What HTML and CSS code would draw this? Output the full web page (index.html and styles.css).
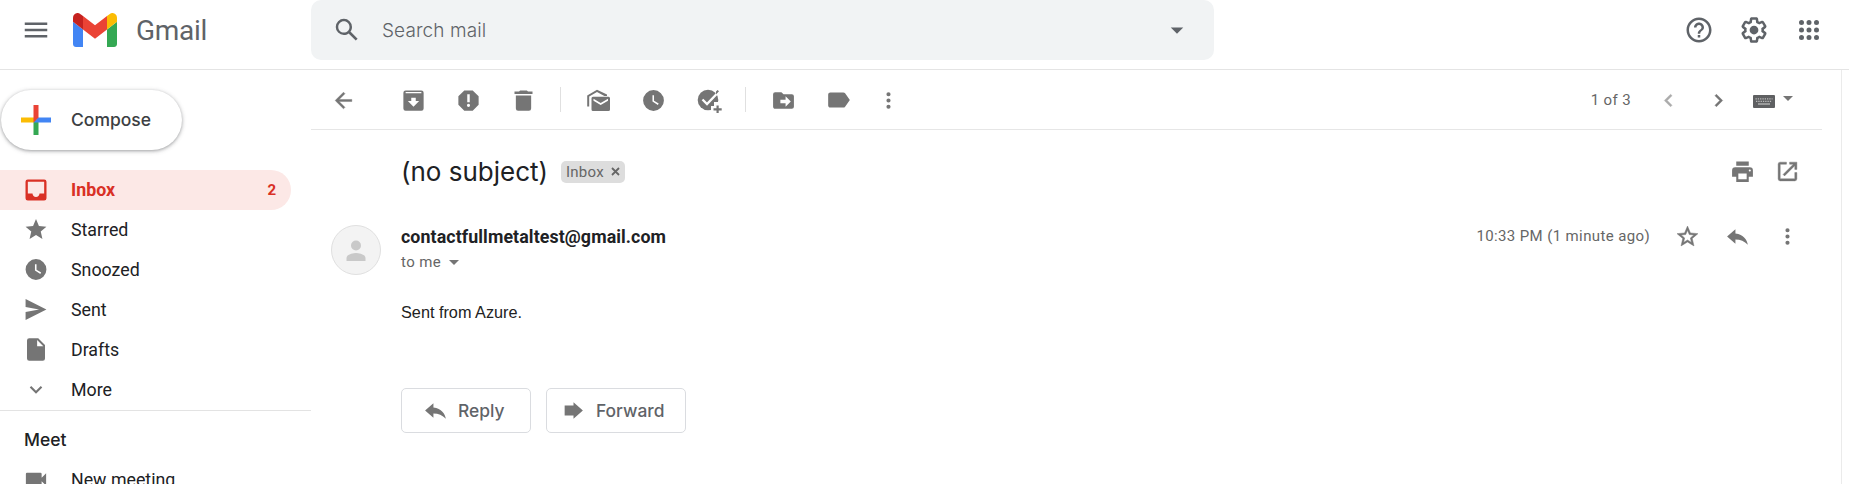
FILE: index.html
```html
<!DOCTYPE html>
<html lang="en">
<head>
<meta charset="utf-8">
<title>Gmail</title>
<link rel="stylesheet" href="styles.css">
</head>
<body>
<header class="header">
  <svg class="menu-icon" width="30" height="30" viewBox="0 0 24 24"><path d="M3 18h18v-2H3v2zm0-5h18v-2H3v2zm0-7v2h18V6H3z"/></svg>
  <svg class="logo" width="44" height="34" viewBox="52 42 88 66" preserveAspectRatio="none">
    <path fill="#4285f4" d="M58 108h14V74L52 59v43c0 3.320 2.690 6 6 6"/>
    <path fill="#34a853" d="M120 108h14c3.320 0 6-2.690 6-6V59l-20 15"/>
    <path fill="#fbbc04" d="M120 48v26l20-15v-8c0-7.420-8.470-11.650-14.400-7.200"/>
    <path fill="#ea4335" d="M72 74V48l24 18 24-18v26L96 92"/>
    <path fill="#c5221f" d="M52 51v8l20 15V48l-5.600-4.200c-5.940-4.450-14.400-.22-14.400 7.200"/>
  </svg>
  <span class="brand">Gmail</span>
  <div class="search">
    <svg width="30" height="30" viewBox="0 0 24 24"><path d="M20.490 19l-5.730-5.730C15.530 12.200 16 10.910 16 9.500A6.500 6.500 0 1 0 9.500 16c1.410 0 2.700-.47 3.770-1.240L19 20.490 20.490 19zM5 9.500C5 7.010 7.010 5 9.500 5S14 7.010 14 9.500 11.990 14 9.500 14 5 11.990 5 9.500z"/></svg>
    <span class="search-text">Search mail</span>
    <svg width="30" height="30" viewBox="0 0 24 24"><path d="M7 10l5 5 5-5z"/></svg>
  </div>
  <div class="header-tools">
    <svg width="30" height="30" viewBox="0 0 24 24"><path d="M11 18h2v-2h-2v2zm1-16C6.480 2 2 6.480 2 12s4.480 10 10 10 10-4.480 10-10S17.520 2 12 2zm0 18c-4.410 0-8-3.590-8-8s3.590-8 8-8 8 3.590 8 8-3.590 8-8 8zm0-14c-2.210 0-4 1.790-4 4h2c0-1.100.9-2 2-2s2 .9 2 2c0 2-3 1.750-3 5h2c0-2.250 3-2.500 3-5 0-2.210-1.790-4-4-4z"/></svg>
    <svg width="30" height="30" viewBox="0 0 24 24"><path d="M13.850 22.250h-3.700c-.74 0-1.360-.54-1.450-1.270l-.27-1.890c-.27-.14-.53-.29-.79-.46l-1.800.72c-.7.260-1.470-.03-1.810-.65L2.200 15.530c-.35-.66-.2-1.440.36-1.880l1.530-1.190c-.01-.15-.02-.3-.02-.46 0-.15.010-.31.020-.46l-1.520-1.190c-.59-.45-.74-1.260-.37-1.880l1.850-3.190c.34-.62 1.110-.9 1.790-.63l1.810.73c.26-.17.52-.32.780-.46l.27-1.910c.09-.7.710-1.250 1.440-1.250h3.700c.74 0 1.360.54 1.450 1.270l.27 1.890c.27.14.53.29.79.46l1.800-.72c.71-.26 1.480.03 1.820.65l1.840 3.180c.36.66.2 1.440-.36 1.880l-1.520 1.190c.01.15.020.3.020.46s-.010.310-.020.460l1.520 1.190c.56.45.72 1.230.37 1.860l-1.860 3.220c-.34.62-1.110.9-1.800.63l-1.800-.72c-.26.17-.52.32-.78.46l-.27 1.910c-.1.680-.72 1.220-1.460 1.220zm-3.230-2h2.760l.37-2.550.53-.22c.44-.18.88-.44 1.340-.78l.45-.34 2.380.96 1.380-2.400-2.030-1.580.07-.56c.03-.26.060-.51.060-.78s-.030-.53-.06-.78l-.07-.56 2.030-1.580-1.390-2.400-2.390.96-.45-.35c-.42-.32-.87-.58-1.330-.77l-.52-.22-.37-2.550h-2.760l-.37 2.550-.53.210c-.44.190-.88.440-1.340.790l-.45.330-2.380-.95-1.390 2.390 2.030 1.580-.07.560a7 7 0 0 0-.06.790c0 .26.020.53.060.78l.07.560-2.030 1.580 1.380 2.400 2.390-.96.45.35c.43.33.86.58 1.330.77l.53.220z"/><circle cx="12" cy="12" r="3.500"/></svg>
    <svg width="30" height="30" viewBox="0 0 24 24"><path d="M6 8a2 2 0 1 0 0-4 2 2 0 0 0 0 4zm6 0a2 2 0 1 0 0-4 2 2 0 0 0 0 4zm6 0a2 2 0 1 0 0-4 2 2 0 0 0 0 4zM6 14a2 2 0 1 0 0-4 2 2 0 0 0 0 4zm6 0a2 2 0 1 0 0-4 2 2 0 0 0 0 4zm6 0a2 2 0 1 0 0-4 2 2 0 0 0 0 4zM6 20a2 2 0 1 0 0-4 2 2 0 0 0 0 4zm6 0a2 2 0 1 0 0-4 2 2 0 0 0 0 4zm6 0a2 2 0 1 0 0-4 2 2 0 0 0 0 4z"/></svg>
  </div>
</header>
<div class="body">
  <nav class="sidebar">
    <div class="compose">
      <svg width="30" height="30" viewBox="0 0 36 36"><path fill="#34a853" d="M15 16v20h6V20z"/><path fill="#4285f4" d="M36 15H20l-5 6h21z"/><path fill="#fbbc04" d="M0 15v6h15l4-6z"/><path fill="#ea4335" d="M21 0h-6v21l6-6z"/></svg>
      <span>Compose</span>
    </div>
    <div class="nav-item active">
      <svg width="28" height="28" viewBox="0 0 24 24"><path d="M19 3H5a2 2 0 0 0-2 2v14a2 2 0 0 0 2 2h14a2 2 0 0 0 2-2V5a2 2 0 0 0-2-2zm0 12h-4c0 1.660-1.350 3-3 3s-3-1.340-3-3H5V5h14v10z"/></svg>
      <span class="nav-label">Inbox</span><span class="count">2</span>
    </div>
    <div class="nav-item"><svg width="25" height="25" viewBox="0 0 24 24"><path d="M12 17.270L18.180 21l-1.640-7.030L22 9.240l-7.190-.61L12 2 9.190 8.630 2 9.240l5.460 4.730L5.820 21z"/></svg><span class="nav-label">Starred</span></div>
    <div class="nav-item"><svg width="25" height="25" viewBox="0 0 24 24"><path d="M12 2a10 10 0 1 0 0 20 10 10 0 0 0 0-20zm4.200 14.200L11 13V7h1.500v5.200l4.500 2.700-.8 1.300z"/></svg><span class="nav-label">Snoozed</span></div>
    <div class="nav-item"><svg width="25" height="25" viewBox="0 0 24 24"><path d="M2 2v7.500L15 12 2 14.500V22l20-10z"/></svg><span class="nav-label">Sent</span></div>
    <div class="nav-item"><svg width="27" height="27" viewBox="0 0 24 24"><path d="M14 2H6a2 2 0 0 0-2 2v16a2 2 0 0 0 2 2h12a2 2 0 0 0 2-2V8l-6-6zm-1 7V3.500L18.500 9H13z"/></svg><span class="nav-label">Drafts</span></div>
    <div class="nav-item"><svg width="25" height="25" viewBox="0 0 24 24"><path d="M16.590 8.590L12 13.170 7.410 8.590 6 10l6 6 6-6z"/></svg><span class="nav-label">More</span></div>
    <div class="meet">
      <div class="meet-title">Meet</div>
      <div class="nav-item"><svg width="27" height="27" viewBox="0 0 24 24"><path d="M17 10.500V7a1 1 0 0 0-1-1H4a1 1 0 0 0-1 1v10a1 1 0 0 0 1 1h12a1 1 0 0 0 1-1v-3.500l4 4v-11z"/></svg><span class="nav-label">New meeting</span></div>
    </div>
  </nav>
  <main class="main">
    <div class="toolbar">
      <svg class="back" width="25" height="25" viewBox="0 0 24 24"><path stroke="#757575" stroke-width=".4" d="M20 11H7.830l5.590-5.590L12 4l-8 8 8 8 1.410-1.410L7.830 13H20z"/></svg>
      <svg class="t-archive" width="27" height="27" viewBox="0 0 24 24"><path d="M19 3H5a2 2 0 0 0-2 2v14a2 2 0 0 0 2 2h14a2 2 0 0 0 2-2V5a2 2 0 0 0-2-2zm-7 14.500l-5-5h3V9.500h4v3h3zM5 5.600V4.500h14v1.100z"/></svg>
      <svg class="t-spam" width="27" height="27" viewBox="0 0 24 24"><path d="M15.730 3H8.270L3 8.270v7.460L8.270 21h7.460L21 15.730V8.270zM12 17.700a1.400 1.400 0 1 1 0-2.800 1.400 1.400 0 0 1 0 2.800zm1.100-4.200h-2.200V6.500h2.200z"/></svg>
      <svg class="t-trash" width="27" height="27" viewBox="0 0 24 24"><path d="M5.200 19a2 2 0 0 0 2 2h9.600a2 2 0 0 0 2-2V7.500H5.200V19zM20 4h-4l-1-1H9L8 4H4v2.200h16z"/></svg>
      <i class="rule r1"></i>
      <svg class="t-mail" width="25" height="25" viewBox="0 0 25 25"><path d="M1.200 18.500V7.500L11 1.800 21 6.600V8h-2.600L11 4 3.200 8.500v10zM7 8.700h15.500a1.500 1.500 0 0 1 1.500 1.500v11.300a1.500 1.500 0 0 1-1.500 1.500H7a1.500 1.500 0 0 1-1.500-1.500V10.200A1.500 1.500 0 0 1 7 8.700zm7.700 8.300L22 12.700v-2l-7.300 4.300-7.200-4.300v2z"/></svg>
      <svg class="t-clock" width="25" height="25" viewBox="0 0 24 24"><path d="M12 2a10 10 0 1 0 0 20 10 10 0 0 0 0-20zm4.200 14.200L11 13V7h1.500v5.200l4.500 2.700-.8 1.300z"/></svg>
      <svg class="t-task" width="26" height="26" viewBox="0 0 26 26"><circle cx="12" cy="13" r="10.300"/><path d="M6.500 12.500l4.500 4.500L23 4.500" fill="none" stroke="#fff" stroke-width="2.300"/><path d="M18 15h8v11H15v-7h3z" fill="#fff"/><path d="M20.500 18.500h2.200v2.800h3v2.200h-3v2.500h-2.200v-2.500h-3v-2.200h3zM20 4.600l1.600-1.700 1.400 1.400-3 3.200z"/></svg>
      <i class="rule r2"></i>
      <svg class="t-move" width="25" height="25" viewBox="0 0 24 24"><path d="M20 6h-8l-2-2H4a2 2 0 0 0-2 2v12c0 1.100.9 2 2 2h16a2 2 0 0 0 2-2V8a2 2 0 0 0-2-2zm-6 12v-3.300H9v-3.400h5V8l5 5z"/></svg>
      <svg class="t-label" width="26" height="26" viewBox="0 0 24 24"><path d="M17.630 5.840A2 2 0 0 0 16 5H4a2 2 0 0 0-2 2v10c0 1.100.9 2 2 2h12c.67 0 1.270-.33 1.630-.84L22 12z"/></svg>
      <svg class="t-more" width="25" height="25" viewBox="0 0 24 24"><path d="M12 8a2 2 0 1 0 0-4 2 2 0 0 0 0 4zm0 6a2 2 0 1 0 0-4 2 2 0 0 0 0 4zm0 6a2 2 0 1 0 0-4 2 2 0 0 0 0 4z"/></svg>
      <span class="pager">1 of 3</span>
      <svg class="prev" width="25" height="25" viewBox="0 0 24 24"><path stroke="#757575" stroke-width=".4" d="M15.410 7.410L14 6l-6 6 6 6 1.410-1.410L10.830 12z"/></svg>
      <svg class="next" width="25" height="25" viewBox="0 0 24 24"><path stroke="#757575" stroke-width=".4" d="M10 6L8.590 7.410 13.170 12l-4.580 4.590L10 18l6-6z"/></svg>
      <svg class="keys" width="22" height="13" viewBox="0 0 22 13"><rect width="22" height="13" rx="1" fill="#5f6062"/><path d="M2.500 3.800h17M3 6.300h16" stroke="#bbb" stroke-width="1.300" stroke-dasharray="1.300 1"/><path d="M5 9h12" stroke="#bbb" stroke-width="1.300"/></svg>
      <i class="caret keys-caret"></i>
    </div>
    <div class="subject-row">
      <h1 class="subject">(no subject)</h1>
      <span class="chip">Inbox<svg width="9" height="9" viewBox="0 0 9 9"><path d="M1 1l7 7M8 1L1 8" stroke="#666" stroke-width="1.800"/></svg></span>
      <svg class="print" width="25" height="25" viewBox="0 0 24 24"><path d="M19 8H5a3 3 0 0 0-3 3v6h4v5h12v-5h4v-6a3 3 0 0 0-3-3zm-3 11.500H8V14h8v5.500zM19 12a1 1 0 1 1 0-2 1 1 0 0 1 0 2zM18 2.500H6v4h12z"/></svg>
      <svg width="25" height="25" viewBox="0 0 24 24"><path stroke="#757575" stroke-width=".4" d="M19 19H5V5h6V3H5a2 2 0 0 0-2 2v14a2 2 0 0 0 2 2h14a2 2 0 0 0 2-2v-6h-2v6zM14 3v2h3.590l-9.830 9.830 1.410 1.410L19 6.410V10h2V3z"/></svg>
    </div>
    <div class="message">
      <div class="avatar"><svg width="50" height="50" viewBox="0 0 50 50"><circle cx="25" cy="20.500" r="5" fill="#c9c9c9"/><path fill="#c9c9c9" d="M15.500 36v-3c0-3.500 6-5 9.500-5s9.500 1.500 9.500 5v3z"/></svg></div>
      <div class="content">
        <div class="from-row">
          <span class="from">contactfullmetaltest@gmail.com</span>
          <span class="time">10:33 PM (1 minute ago)</span>
          <svg class="m-star" width="25" height="25" viewBox="0 0 24 24"><path stroke="#757575" stroke-width=".5" d="M22 9.240l-7.190-.62L12 2 9.190 8.630 2 9.240l5.460 4.730L5.820 21 12 17.270 18.180 21l-1.630-7.030zM12 15.400l-3.760 2.270 1-4.280-3.320-2.880 4.380-.38L12 6.100l1.710 4.040 4.380.38-3.320 2.880 1 4.280z"/></svg>
          <svg class="m-reply" width="25" height="25" viewBox="0 0 24 24"><path d="M10 9V5l-8 7 8 7v-4.100c5 0 8.500 1.600 12 5.100-1-5-4-10-12-11z"/></svg>
          <svg class="m-more" width="25" height="25" viewBox="0 0 24 24"><path d="M12 8a2 2 0 1 0 0-4 2 2 0 0 0 0 4zm0 6a2 2 0 1 0 0-4 2 2 0 0 0 0 4zm0 6a2 2 0 1 0 0-4 2 2 0 0 0 0 4z"/></svg>
        </div>
        <div class="to">to me <i class="caret"></i></div>
        <p class="text">Sent from Azure.</p>
        <div class="actions">
          <span class="btn reply"><svg width="25" height="25" viewBox="0 0 24 24"><path d="M10 9V5l-8 7 8 7v-4.100c5 0 8.500 1.600 12 5.100-1-5-4-10-12-11z"/></svg>Reply</span>
          <span class="btn forward"><svg width="25" height="25" viewBox="0 0 24 24"><path d="M3.500 7.200H12V4l9 8-9 8v-3.200H3.500z"/></svg>Forward</span>
        </div>
      </div>
    </div>
  </main>
</div>
</body>
</html>
```
FILE: styles.css
```css
* { box-sizing: border-box; }
body {
  margin: 0;
  height: 484px;
  overflow: hidden;
  background: #fff;
  font-family: Roboto, "Liberation Sans", sans-serif;
  color: #202124;
}
svg { flex: none; display: block; fill: #757575; }

.header { display: flex; height: 70px; border-bottom: 1px solid #e4e4e4; align-items: flex-start; }
.header svg { fill: #5f6368; }
.header .menu-icon { margin: 15px 0 0 21px; }
.header .logo { margin: 13px 0 0 22px; }
.brand { width: 194px; padding-left: 19px; line-height: 61px; font-size: 28px; color: #5f6368; letter-spacing: -0.3px; }
.search { display: flex; align-items: center; width: 903px; height: 60px; padding: 0 22px 0 21px; border-radius: 10px; background: #f1f3f4; }
.search-text { flex: 1; padding-left: 20px; font: 300 19px Inter, sans-serif; letter-spacing: .1px; color: #5f6368; }
.header-tools { display: flex; gap: 25px; margin: 15px 0 0 470px; }

.body { display: flex; height: 414px; }
.sidebar { width: 311px; flex: none; padding-top: 20px; }
.compose {
  display: flex; align-items: center; width: 181px; height: 60px; margin: 0 0 20px 1px; padding: 0 0 1px 20px;
  border-radius: 30px; box-shadow: 0 1px 3px rgba(60,64,67,.35), 0 1px 4px 1px rgba(60,64,67,.16);
  font: 500 17.5px Inter, sans-serif; color: #3c4043; gap: 20px;
}
.nav-item { display: flex; align-items: center; width: 291px; height: 40px; padding: 0 15px 1px 22px; font-size: 17.8px; }
.nav-item svg { width: 28px; }
.nav-label { flex: 1; padding-left: 21px; }
.active { background: #fce8e6; color: #d93025; font-weight: 700; border-radius: 0 20px 20px 0; }
.active svg { fill: #d93025; }
.count { font-size: 15px; }
.meet { border-top: 1px solid #e3e3e3; }
.meet-title { height: 49px; padding: 18px 0 0 24px; font: 500 17.5px/22px Inter, sans-serif; }

.main { width: 1531px; border-right: 1px solid #ebebeb; }
.toolbar { display: flex; align-items: center; width: 1511px; height: 60px; border-bottom: 1px solid #e6e6e6; }
.toolbar > svg:not(.keys) { margin-top: 1px; }
.back { margin-left: 20px; }
.t-archive { margin-left: 44px; }
.t-spam, .t-trash { margin-left: 28px; }
.rule { width: 1px; height: 25px; background: #e0e0e0; }
.r1 { margin-left: 23px; }
.t-mail { margin-left: 25px; }
.t-clock { margin-left: 30px; }
.t-task { margin-left: 30px; }
.r2 { margin-left: 23px; }
.t-move { margin-left: 25px; }
.t-label { margin-left: 30px; }
.t-more { margin-left: 24px; }
.pager { margin-left: auto; font-size: 15px; letter-spacing: .375px; color: #666; }
.prev { margin-left: 25px; opacity: .6; }
.next { margin-left: 25px; }
.keys { margin: 4px 0 0 22px; }
.caret { display: inline-block; border: 5px solid transparent; border-top-color: #757575; border-bottom: 0; }
.keys-caret { margin: 0 29px 2px 8px; }

.subject-row { display: flex; align-items: center; height: 83px; padding: 0 41px 0 90px; }
.subject { margin: 0; width: 160px; font: 400 26px Inter, sans-serif; white-space: nowrap; }
.chip { display: flex; align-items: center; gap: 7px; width: 64px; height: 22px; padding-left: 5px; border-radius: 5px; background: #ddd; color: #666; font-size: 15px; letter-spacing: .25px; }
.print { margin: 0 20px 0 auto; }
.message { display: flex; padding-left: 20px; }
.avatar { width: 50px; height: 50px; margin-top: 12px; border-radius: 50%; background: #f3f3f3; border: 1px solid #e0e0e0; }
.avatar svg { margin: -1px; }
.content { flex: 1; padding-left: 20px; }
.from-row { display: flex; align-items: center; height: 48px; padding: 0 41px 2px 0; }
.from { font-size: 17.8px; font-weight: 700; letter-spacing: .1px; }
.time { margin-left: auto; font-size: 15px; letter-spacing: .375px; color: #666; }
.m-star { margin-left: 25px; }
.m-reply, .m-more { margin-left: 25px; }
.to { display: flex; align-items: center; height: 2px; gap: 8px; font-size: 15px; letter-spacing: .375px; color: #666; }
.text { margin: 39px 0 0; font: 16.250px/20px "Liberation Sans", sans-serif; color: #222; }
.actions { display: flex; gap: 15px; margin-top: 66px; }
.btn { display: flex; align-items: center; height: 45px; padding-bottom: 1px; border: 1px solid #dadce0; border-radius: 5px; font: 500 17.400px Inter, sans-serif; color: #5f6368; }
.reply { width: 130px; padding-left: 21px; gap: 10px; }
.forward { width: 140px; padding-left: 14px; gap: 10px; }
```
